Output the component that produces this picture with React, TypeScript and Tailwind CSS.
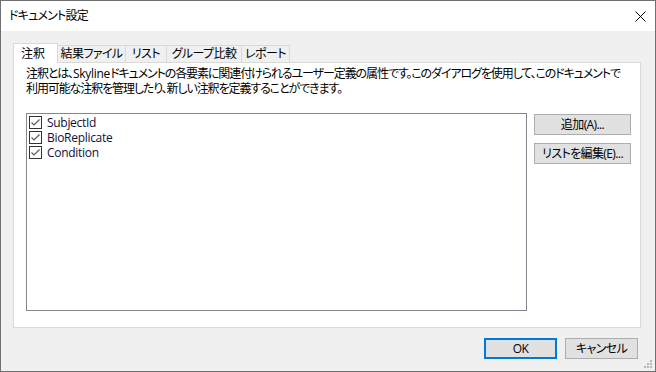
import React from "react";

const font = {
  fontFamily: '"Open Sans", "Noto Sans CJK JP", sans-serif',
};

function Check() {
  return (
    <span className="w-[13px] h-[13px] border border-[#333333] bg-white flex items-center justify-center shrink-0">
      <svg width="11" height="11" viewBox="0 0 11 11">
        <path d="M1.5 5.5 L4 8 L9.5 2.5" fill="none" stroke="#5a5a5a" strokeWidth="1.2" />
      </svg>
    </span>
  );
}

function Btn({ children, primary, w }: { children: React.ReactNode; primary?: boolean; w: string }) {
  return (
    <div
      className={
        "h-[21px] bg-[#e1e1e1] flex items-center justify-center text-[12px] text-black tracking-[-0.6px] " +
        w +
        (primary ? " border-2 border-[#0078d7]" : " border border-[#adadad]")
      }
    >
      {children}
    </div>
  );
}

export default function App() {
  const tabs = [
    { label: "結果ファイル", w: "w-[68px]" },
    { label: "リスト", w: "w-[41px]" },
    { label: "グループ比較", w: "w-[75px]" },
    { label: "レポート", w: "w-[48px]" },
  ];
  const items = ["SubjectId", "BioReplicate", "Condition"];
  return (
    <div
      className="w-[656px] h-[372px] border border-[#717171] bg-[#f0f0f0] flex flex-col relative text-black [font-feature-settings:'palt']"
      style={font}
    >
      <div className="h-[30px] bg-white flex items-center justify-between pl-[8px] pr-[9px] shrink-0">
        <span className="text-[12px] leading-[14px] tracking-[-0.8px]">ドキュメント設定</span>
        <svg width="11" height="11" viewBox="0 0 11 11" className="mt-[1px]">
          <path d="M0.5 0.5 L10.5 10.5 M10.5 0.5 L0.5 10.5" stroke="#000" strokeWidth="1" />
        </svg>
      </div>
      <div className="flex flex-col pl-[12px] pr-[14px] pt-[12px] flex-1">
        <div className="flex items-end h-[19px] relative z-10">
          <div className="w-[45px] h-[20px] -mb-px bg-white border border-b-0 border-[#d9d9d9] flex items-center pl-[7px] text-[12px] leading-[14px]">
            注釈
          </div>
          {tabs.map((t) => (
            <div
              key={t.label}
              className={
                "h-[17px] bg-[#f0f0f0] border border-l-0 border-b-0 border-[#d9d9d9] flex items-center justify-center text-[12px] leading-[14px] tracking-[-0.6px] " +
                t.w
              }
            >
              {t.label}
            </div>
          ))}
        </div>
        <div className="w-[628px] h-[266px] bg-white border border-[#d9d9d9] flex flex-col pl-[12px] pr-[8px] pt-[3px]">
          <p className="text-[12px] leading-[15px] whitespace-nowrap tracking-[-1.1px]">
            注釈とは、<span className="tracking-[-0.3px]">Skyline</span>ドキュメントの各要素に関連付けられるユーザー定義の属性です。このダイアログを使用して、このドキュメントで
            <br />
            利用可能な注釈を管理したり、新しい注釈を定義することができます。
          </p>
          <div className="flex mt-[17px] gap-[7px]">
            <div className="w-[501px] h-[198px] border border-[#828790] bg-white flex flex-col pt-[1px] pl-[2px]">
              {items.map((it) => (
                <div key={it} className="flex items-center h-[15px] shrink-0 gap-[5px] overflow-hidden">
                  <Check />
                  <span className="text-[12px] leading-[15px] text-[#101040] tracking-[-0.3px]">{it}</span>
                </div>
              ))}
            </div>
            <div className="flex flex-col gap-[8px] pt-[1px]">
              <Btn w="w-[97px]">追加(A)...</Btn>
              <Btn w="w-[97px]">リストを編集(E)...</Btn>
            </div>
          </div>
        </div>
        <div className="flex justify-end gap-[8px] mt-[10px] pr-[3px]">
          <Btn primary w="w-[73px]">OK</Btn>
          <Btn w="w-[73px]">キャンセル</Btn>
        </div>
      </div>
      <svg width="9" height="9" viewBox="0 0 9 9" className="absolute right-[2px] bottom-[2px]">
        <rect x="6" y="0" width="2" height="2" fill="#b8b8b8" />
        <rect x="3" y="3" width="2" height="2" fill="#b8b8b8" />
        <rect x="6" y="3" width="2" height="2" fill="#b8b8b8" />
        <rect x="0" y="6" width="2" height="2" fill="#b8b8b8" />
        <rect x="3" y="6" width="2" height="2" fill="#b8b8b8" />
        <rect x="6" y="6" width="2" height="2" fill="#b8b8b8" />
      </svg>
    </div>
  );
}
